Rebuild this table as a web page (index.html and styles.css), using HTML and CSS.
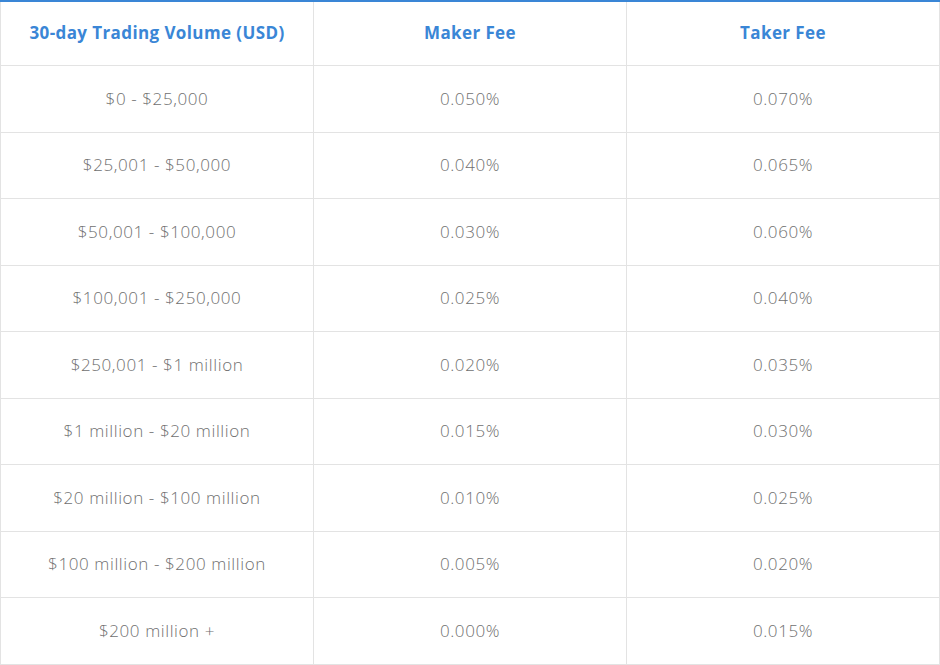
FILE: index.html
```html
<!DOCTYPE html>
<html lang="en">
<head>
<meta charset="utf-8">
<title>Trading Fees</title>
<link rel="stylesheet" href="styles.css">
</head>
<body>
<table class="fees">
  <thead>
    <tr>
      <th>30-day Trading Volume (USD)</th>
      <th>Maker Fee</th>
      <th>Taker Fee</th>
    </tr>
  </thead>
  <tbody>
    <tr><td>$0 - $25,000</td><td>0.050%</td><td>0.070%</td></tr>
    <tr><td>$25,001 - $50,000</td><td>0.040%</td><td>0.065%</td></tr>
    <tr><td>$50,001 - $100,000</td><td>0.030%</td><td>0.060%</td></tr>
    <tr><td>$100,001 - $250,000</td><td>0.025%</td><td>0.040%</td></tr>
    <tr><td>$250,001 - $1 million</td><td>0.020%</td><td>0.035%</td></tr>
    <tr><td>$1 million - $20 million</td><td>0.015%</td><td>0.030%</td></tr>
    <tr><td>$20 million - $100 million</td><td>0.010%</td><td>0.025%</td></tr>
    <tr><td>$100 million - $200 million</td><td>0.005%</td><td>0.020%</td></tr>
    <tr><td>$200 million +</td><td>0.000%</td><td>0.015%</td></tr>
  </tbody>
</table>
</body>
</html>
```
FILE: styles.css
```css
html, body {
  margin: 0;
  padding: 0;
  background: #ffffff;
}

.fees {
  width: 940px;
  border-collapse: collapse;
  table-layout: fixed;
  font-family: "Open Sans", "Nunito", "Noto Sans", sans-serif;
}

.fees th,
.fees td {
  border: 1px solid #e3e3e3;
  text-align: center;
  vertical-align: middle;
  padding: 0;
}

.fees th {
  border-top: 2px solid #3a86d6;
  color: #3a86d6;
  font-weight: 700;
  font-size: 17px;
  letter-spacing: 0.4px;
  height: 62px;
  padding-bottom: 1px;
  line-height: 20px;
}

.fees td {
  color: #707070;
  font-weight: 300;
  font-size: 17px;
  letter-spacing: 0.6px;
  height: 64.5px;
  padding-bottom: 1px;
}
```
